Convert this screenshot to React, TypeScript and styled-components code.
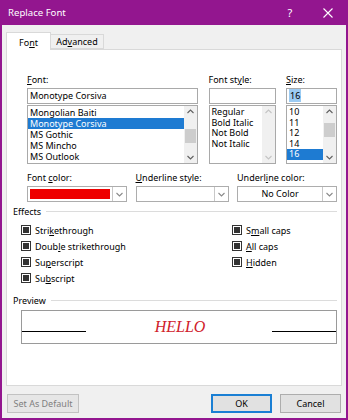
import React from "react";
import styled, { createGlobalStyle } from "styled-components";

const purple = "#93168f";
const ui = `"Noto Sans", "Open Sans", sans-serif`;

const GlobalStyle = createGlobalStyle`
  html, body { margin: 0; padding: 0; background: #ffffff; }
  body { font-family: ${ui}; }
  #root { width: 348px; height: 420px; }
`;

const Window = styled.div`
  width: 348px;
  height: 420px;
  box-sizing: border-box;
  background: #f0f0f0;
  border: 2px solid ${purple};
  border-top: none;
  display: flex;
  flex-direction: column;
  font-size: 9px;
  color: #000;
`;

const TitleBar = styled.div`
  height: 25px;
  flex: none;
  margin: 0 -2px;
  background: ${purple};
  color: #fff;
  display: flex;
  align-items: center;
  padding-left: 8px;
  font-size: 9.6px;
`;

const TitleButtons = styled.div`
  margin-left: auto;
  display: flex;
  gap: 10px;
  padding-right: 6px;
`;

const TitleButton = styled.div`
  width: 28px;
  height: 25px;
  display: flex;
  align-items: center;
  justify-content: center;
  font-size: 11px;
`;

const Body = styled.div`
  flex: 1;
  display: flex;
  flex-direction: column;
  padding: 7px 4px 0 4px;
`;

const TabRow = styled.div`
  display: flex;
  align-items: flex-end;
  height: 17px;
`;

const Tab = styled.div<{ $active?: boolean }>`
  box-sizing: border-box;
  height: ${(p) => (p.$active ? 18 : 15)}px;
  width: ${(p) => (p.$active ? 45 : 53)}px;
  margin-bottom: ${(p) => (p.$active ? -1 : 0)}px;
  position: relative;
  z-index: ${(p) => (p.$active ? 1 : 0)};
  background: ${(p) => (p.$active ? "#ffffff" : "#f0f0f0")};
  border: 1px solid #d9d9d9;
  border-bottom: ${(p) => (p.$active ? "none" : "1px solid #d9d9d9")};
  border-left: ${(p) => (p.$active ? "1px solid #d9d9d9" : "none")};
  display: flex;
  align-items: center;
  justify-content: center;
  padding-top: ${(p) => (p.$active ? 1 : 0)}px;
`;

const Panel = styled.div`
  box-sizing: border-box;
  height: 337px;
  background: #ffffff;
  border: 1px solid #d9d9d9;
  padding: 23px 4px 0 6px;
  display: flex;
  flex-direction: column;
`;

const FieldRow = styled.div<{ $top?: number }>`
  display: flex;
  justify-content: space-between;
  margin-left: 14px;
  margin-top: ${(p) => p.$top || 0}px;
`;

const Column = styled.div<{ $w: number }>`
  width: ${(p) => p.$w}px;
  display: flex;
  flex-direction: column;
`;

const Label = styled.div`
  height: 15px;
  line-height: 14px;
  white-space: nowrap;
`;

const TextBox = styled.div`
  box-sizing: border-box;
  height: 16px;
  border: 1px solid #a9a9a9;
  padding: 0 2px;
  line-height: 14px;
  white-space: nowrap;
`;

const Selected = styled.span`
  background: #9ccbf2;
  padding: 0 1px;
`;

const List = styled.div`
  box-sizing: border-box;
  height: 59px;
  margin-top: 1px;
  border: 1px solid #a9a9a9;
  display: flex;
`;

const Items = styled.div`
  flex: 1;
  min-width: 0;
  padding-top: 1px;
`;

const Item = styled.div<{ $sel?: boolean; $h: number }>`
  height: ${(p) => p.$h}px;
  line-height: ${(p) => p.$h}px;
  padding-left: 2px;
  white-space: nowrap;
  background: ${(p) => (p.$sel ? "#1e7bd2" : "transparent")};
  color: ${(p) => (p.$sel ? "#ffffff" : "#000000")};
`;

const ScrollBar = styled.div<{ $thumbTop: number; $disabled?: boolean }>`
  width: 13px;
  flex: none;
  background: #f0f0f0;
  display: flex;
  flex-direction: column;
  align-items: center;
  justify-content: space-between;
  padding: 3px 0;
  position: relative;
  &::after {
    content: "";
    display: ${(p) => (p.$disabled ? "none" : "block")};
    position: absolute;
    left: 1px;
    right: 1px;
    top: ${(p) => p.$thumbTop}px;
    height: 14px;
    background: #cdcdcd;
  }
`;

const Chevron = ({ up, color = "#606060" }: { up?: boolean; color?: string }) => (
  <svg width="7" height="5" viewBox="0 0 7 5">
    <polyline
      points={up ? "0.5,4 3.5,1 6.5,4" : "0.5,1 3.5,4 6.5,1"}
      fill="none"
      stroke={color}
      strokeWidth="1.1"
    />
  </svg>
);

const Dropdown = styled.div`
  box-sizing: border-box;
  height: 16px;
  border: 1px solid #adadad;
  background: #ffffff;
  display: flex;
  align-items: stretch;
`;

const DropValue = styled.div`
  flex: 1;
  display: flex;
  align-items: center;
  justify-content: center;
  padding: 2px;
  line-height: 12px;
`;

const Swatch = styled.div`
  flex: 1;
  align-self: stretch;
  background: #ee0000;
`;

const DropArrow = styled.div`
  width: 13px;
  border-left: 1px solid #c8c8c8;
  display: flex;
  align-items: center;
  justify-content: center;
`;

const SectionHead = styled.div<{ $top: number }>`
  display: flex;
  align-items: center;
  height: 14px;
  margin-top: ${(p) => p.$top}px;
  &::after {
    content: "";
    flex: 1;
    height: 1px;
    background: #dcdcdc;
    margin-left: 5px;
  }
`;

const Effects = styled.div`
  display: grid;
  grid-template-columns: 211px 1fr;
  grid-auto-rows: 16px;
  margin: 4px 0 0 8px;
`;

const CheckRow = styled.div<{ $col: number }>`
  grid-column: ${(p) => p.$col};
  display: flex;
  align-items: center;
  gap: 4px;
`;

const Box = styled.span`
  box-sizing: border-box;
  width: 10px;
  height: 10px;
  border: 1px solid #333333;
  padding: 1px;
  background: #333333;
  background-clip: content-box;
  flex: none;
`;

const PreviewBox = styled.div`
  box-sizing: border-box;
  height: 34px;
  margin: 3px 0 0 8px;
  border: 1px solid #9a9a9a;
  display: flex;
  align-items: center;
`;

const BaseLine = styled.div`
  width: 64px;
  height: 1px;
  background: #000;
  margin-top: 9px;
`;

const Sample = styled.div`
  flex: 1;
  text-align: center;
  font-family: "Liberation Serif", serif;
  font-style: italic;
  font-size: 16px;
  color: #d0202a;
  padding-left: 2px;
`;

const Footer = styled.div`
  display: flex;
  gap: 8px;
  padding: 8px 1px 0 1px;
`;

const Button = styled.div<{ $w: number; $primary?: boolean; $disabled?: boolean }>`
  box-sizing: border-box;
  width: ${(p) => p.$w}px;
  height: 19px;
  background: ${(p) => (p.$disabled ? "#e6e6e6" : "#e1e1e1")};
  border: 1px solid ${(p) => (p.$primary ? "#1a7fd4" : p.$disabled ? "#c2c2c2" : "#adadad")};
  box-shadow: ${(p) => (p.$primary ? "inset 0 0 0 1px #1a7fd4" : "none")};
  color: ${(p) => (p.$disabled ? "#7f7f7f" : "#000")};
  display: flex;
  align-items: center;
  justify-content: center;
  &:first-child {
    margin-right: auto;
  }
`;

const U = styled.span`
  text-decoration: underline;
`;

const fontItems = ["Mongolian Baiti", "Monotype Corsiva", "MS Gothic", "MS Mincho", "MS Outlook"];
const styleItems = ["Regular", "Bold Italic", "Not Bold", "Not Italic"];
const sizeItems = ["10", "11", "12", "14", "16"];

export default function App() {
  return (
    <>
      <GlobalStyle />
      <Window>
        <TitleBar>
          Replace Font
          <TitleButtons>
            <TitleButton>?</TitleButton>
            <TitleButton>
              <svg width="10" height="10" viewBox="0 0 10 10">
                <path d="M0.5 0.5 L9.5 9.5 M9.5 0.5 L0.5 9.5" stroke="#fff" strokeWidth="1.1" />
              </svg>
            </TitleButton>
          </TitleButtons>
        </TitleBar>
        <Body>
          <TabRow>
            <Tab $active>
              Fo<U>n</U>t
            </Tab>
            <Tab>
              Ad<U>v</U>anced
            </Tab>
          </TabRow>
          <Panel>
            <FieldRow>
              <Column $w={171}>
                <Label>
                  <U>F</U>ont:
                </Label>
                <TextBox>Monotype Corsiva</TextBox>
                <List>
                  <Items>
                    {fontItems.map((f) => (
                      <Item key={f} $h={11} $sel={f === "Monotype Corsiva"}>
                        {f}
                      </Item>
                    ))}
                  </Items>
                  <ScrollBar $thumbTop={23}>
                    <Chevron up />
                    <Chevron />
                  </ScrollBar>
                </List>
              </Column>
              <Column $w={67}>
                <Label>
                  Font st<U>y</U>le:
                </Label>
                <TextBox />
                <List>
                  <Items>
                    {styleItems.map((s) => (
                      <Item key={s} $h={10.5}>
                        {s}
                      </Item>
                    ))}
                  </Items>
                  <ScrollBar $thumbTop={0} $disabled>
                    <Chevron up color="#c4c4c4" />
                    <Chevron color="#c4c4c4" />
                  </ScrollBar>
                </List>
              </Column>
              <Column $w={51}>
                <Label>
                  <U>S</U>ize:
                </Label>
                <TextBox>
                  <Selected>16</Selected>
                </TextBox>
                <List>
                  <Items>
                    {sizeItems.map((s) => (
                      <Item key={s} $h={10.5} $sel={s === "16"}>
                        {s}
                      </Item>
                    ))}
                  </Items>
                  <ScrollBar $thumbTop={17}>
                    <Chevron up />
                    <Chevron />
                  </ScrollBar>
                </List>
              </Column>
            </FieldRow>

            <FieldRow $top={7}>
              <Column $w={100}>
                <Label>
                  Font <U>c</U>olor:
                </Label>
                <Dropdown>
                  <DropValue>
                    <Swatch />
                  </DropValue>
                  <DropArrow>
                    <Chevron color="#8a8a8a" />
                  </DropArrow>
                </Dropdown>
              </Column>
              <Column $w={93}>
                <Label>
                  <U>U</U>nderline style:
                </Label>
                <Dropdown>
                  <DropValue />
                  <DropArrow>
                    <Chevron color="#8a8a8a" />
                  </DropArrow>
                </Dropdown>
              </Column>
              <Column $w={100}>
                <Label>
                  Underl<U>i</U>ne color:
                </Label>
                <Dropdown>
                  <DropValue>No Color</DropValue>
                  <DropArrow>
                    <Chevron color="#8a8a8a" />
                  </DropArrow>
                </Dropdown>
              </Column>
            </FieldRow>

            <SectionHead $top={2}>Effects</SectionHead>
            <Effects>
              <CheckRow $col={1}>
                <Box />
                <span>
                  Stri<U>k</U>ethrough
                </span>
              </CheckRow>
              <CheckRow $col={2}>
                <Box />
                <span>
                  S<U>m</U>all caps
                </span>
              </CheckRow>
              <CheckRow $col={1}>
                <Box />
                <span>
                  Doub<U>l</U>e strikethrough
                </span>
              </CheckRow>
              <CheckRow $col={2}>
                <Box />
                <span>
                  <U>A</U>ll caps
                </span>
              </CheckRow>
              <CheckRow $col={1}>
                <Box />
                <span>
                  Su<U>p</U>erscript
                </span>
              </CheckRow>
              <CheckRow $col={2}>
                <Box />
                <span>
                  <U>H</U>idden
                </span>
              </CheckRow>
              <CheckRow $col={1}>
                <Box />
                <span>
                  Su<U>b</U>script
                </span>
              </CheckRow>
            </Effects>

            <SectionHead $top={7}>Preview</SectionHead>
            <PreviewBox>
              <BaseLine />
              <Sample>HELLO</Sample>
              <BaseLine />
            </PreviewBox>
          </Panel>
          <Footer>
            <Button $w={72} $disabled>
              Set As Default
            </Button>
            <Button $w={61} $primary>
              OK
            </Button>
            <Button $w={61}>Cancel</Button>
          </Footer>
        </Body>
      </Window>
    </>
  );
}
